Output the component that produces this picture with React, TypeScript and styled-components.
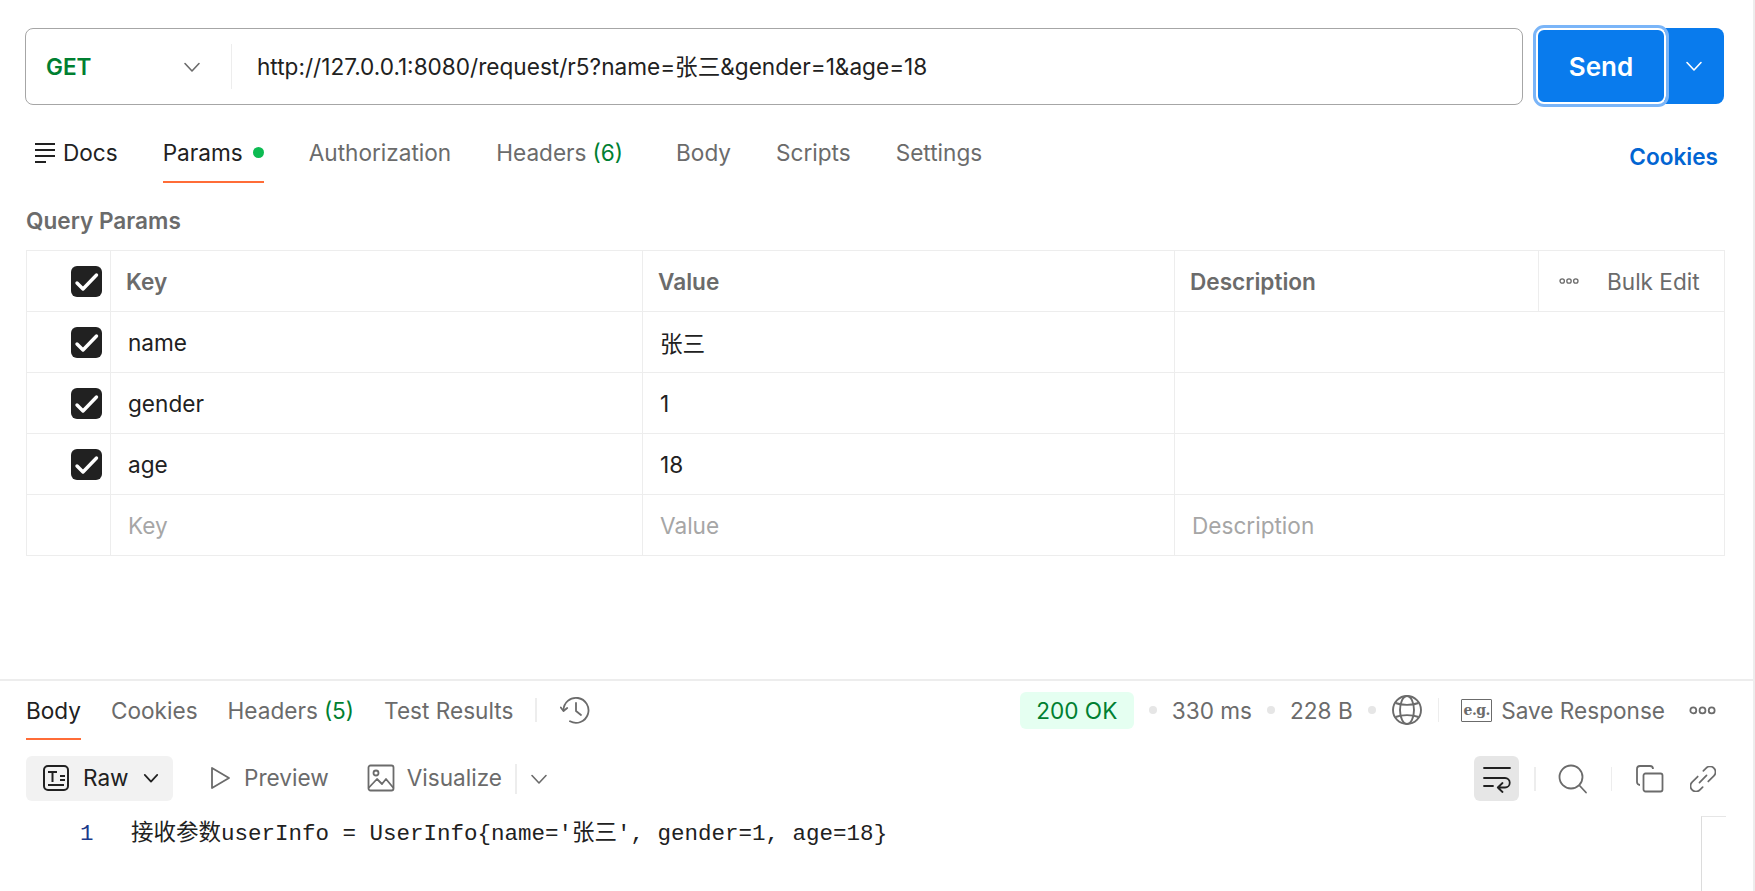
import React from "react";
import styled, { createGlobalStyle } from "styled-components";

const Global = createGlobalStyle`
  html, body { margin: 0; padding: 0; background: #fff; overflow: hidden; }
  * { box-sizing: border-box; }
`;

const sans = `Inter, "Noto Sans CJK SC", sans-serif`;
const grey = "#6b6b6b";
const dark = "#212121";
const line = "#ededed";

const Page = styled.div`
  width: 1755px;
  height: 891px;
  display: flex;
  flex-direction: column;
  font-family: ${sans};
  font-size: 22.6px;
  color: ${dark};
  border-right: 2px solid #ededed;
  overflow: hidden;
`;
const RequestPane = styled.section`
  height: 679px;
  padding: 28px 29px 0 25px;
  flex: none;
`;
const UrlRow = styled.div`
  display: flex;
  height: 77px;
`;
const UrlBox = styled.div`
  width: 1499px;
  height: 77px;
  border: 1.5px solid #a6a6a6;
  border-radius: 8px;
  display: flex;
  align-items: center;
`;
const Method = styled.div`
  width: 206px;
  height: 45px;
  padding: 0 30px 0 20px;
  display: flex;
  align-items: center;
  justify-content: space-between;
  border-right: 1px solid ${line};
  color: #007f31;
  font-weight: 600;
`;
const UrlText = styled.div`
  margin-left: 25px;
  padding-bottom: 3px;
  white-space: nowrap;
`;
const SendGroup = styled.div`
  margin-left: 13px;
  display: flex;
  height: 76px;
`;
const SendButton = styled.button`
  width: 130px;
  height: 76px;
  background: #097bed;
  color: #fff;
  border: 2px solid #fff;
  outline: 3px solid #7ab5f8;
  outline-offset: 0;
  border-radius: 8px;
  font: 600 26px ${sans};
  position: relative;
  z-index: 1;
`;
const SendMenu = styled.div`
  width: 60px;
  margin-left: -2px;
  background: #097bed;
  border-radius: 0 8px 8px 0;
  display: flex;
  align-items: center;
  justify-content: center;
  color: #fff;
`;
const TabRow = styled.div`
  height: 50px;
  margin-top: 28px;
  padding-left: 10px;
  display: flex;
  gap: 45px;
  position: relative;
`;
const Tab = styled.div<{ $active?: boolean; $underline?: boolean; $extra?: number }>`
  height: 50px;
  padding-top: 2px;
  display: flex;
  align-items: flex-start;
  line-height: 36px;
  white-space: nowrap;
  color: ${(p) => (p.$active ? dark : grey)};
  margin-right: ${(p) => p.$extra ?? 0}px;
  border-bottom: 2px solid ${(p) => (p.$underline ? "#ff6c37" : "transparent")};
`;
const DocsIcon = styled.svg`
  margin: 8px 7px 0 0;
`;
const Dot = styled.span`
  width: 11px;
  height: 11px;
  border-radius: 50%;
  background: #0cbb52;
  margin: 12px 0 0 10px;
`;
const Count = styled.span`
  color: #007f31;
  margin-left: 6px;
`;
const CookiesLink = styled.div`
  margin-left: auto;
  margin-right: 6px;
  margin-top: 6px;
  color: #0265d2;
  font-weight: 600;
  line-height: 36px;
`;
const SectionTitle = styled.div`
  margin: 21px 0 0 1px;
  height: 46px;
  line-height: 34px;
  font-weight: 600;
  color: ${grey};
`;
const Table = styled.div`
  margin-left: 1px;
  width: 1699px;
  border: 1px solid ${line};
  border-bottom: 0;
`;
const Row = styled.div<{ $head?: boolean }>`
  display: grid;
  grid-template-columns: ${(p) =>
    p.$head ? "84px 532px 532px 364px 1fr" : "84px 532px 532px 1fr"};
  height: 61px;
  border-bottom: 1px solid ${line};
`;
const Cell = styled.div<{ $muted?: boolean; $head?: boolean; $last?: boolean }>`
  display: flex;
  align-items: center;
  padding-left: ${(p) => (p.$head ? 15 : 17)}px;
  border-right: ${(p) => (p.$last ? 0 : `1px solid ${line}`)};
  color: ${(p) => (p.$muted ? "#a6a6a6" : p.$head ? grey : dark)};
  font-weight: ${(p) => (p.$head ? 600 : 400)};
`;
const CheckCell = styled.div`
  display: flex;
  align-items: center;
  justify-content: flex-end;
  padding-right: 8px;
  border-right: 1px solid ${line};
`;
const Check = styled.span`
  width: 31px;
  height: 31px;
  border-radius: 6px;
  background: ${dark};
  display: flex;
`;
const BulkCell = styled.div`
  display: flex;
  align-items: center;
  color: ${grey};
  padding-left: 20px;
  gap: 28px;
  white-space: nowrap;
`;
const ResponsePane = styled.section`
  flex: 1;
  border-top: 2px solid ${line};
  padding: 0 0 0 26px;
  position: relative;
`;
const RespHead = styled.div`
  height: 59px;
  display: flex;
  align-items: flex-start;
`;
const RespTabs = styled.div`
  display: flex;
  gap: 30px;
  align-items: flex-start;
`;
const RespTab = styled.div<{ $active?: boolean }>`
  height: 59px;
  line-height: 60px;
  color: ${(p) => (p.$active ? dark : grey)};
  border-bottom: 2px solid ${(p) => (p.$active ? "#ff6c37" : "transparent")};
  white-space: nowrap;
`;
const VBar = styled.span<{ $h: number; $ml: number; $mr?: number }>`
  width: 1.5px;
  height: ${(p) => p.$h}px;
  background: ${line};
  margin-left: ${(p) => p.$ml}px;
  margin-right: ${(p) => p.$mr ?? 0}px;
  flex: none;
`;
const HistoryWrap = styled.div`
  height: 58px;
  display: flex;
  align-items: center;
`;
const HeadStatus = styled.div`
  margin-left: auto;
  margin-right: 37px;
  height: 58px;
  display: flex;
  align-items: center;
  color: ${grey};
  white-space: nowrap;
`;
const Badge = styled.div`
  width: 114px;
  height: 37px;
  border-radius: 6px;
  background: #e5fff1;
  color: #007f31;
  display: flex;
  align-items: center;
  justify-content: center;
`;
const Sep = styled.span`
  width: 8px;
  height: 8px;
  border-radius: 50%;
  background: #e6e6e6;
  margin: 0 15px;
`;
const EgBox = styled.span`
  width: 31px;
  height: 23px;
  border: 1.8px solid #6b6b6b;
  border-radius: 1px;
  font: 700 14px "DejaVu Serif", serif;
  letter-spacing: -0.5px;
  display: flex;
  align-items: center;
  justify-content: center;
  color: #6b6b6b;
`;
const SaveText = styled.span`
  margin-left: 9px;
`;
const MoreDots = styled.span`
  margin-left: 24px;
  display: flex;
`;
const Toolbar = styled.div`
  display: flex;
  align-items: center;
  height: 45px;
  margin-top: 16px;
  padding-right: 37px;
`;
const RawBtn = styled.div`
  width: 147px;
  height: 45px;
  border-radius: 6px;
  background: #f2f2f2;
  display: flex;
  align-items: center;
  padding: 0 0 2px 16px;
  gap: 13px;
`;
const RawChevron = styled.span`
  margin-left: 1px;
  display: flex;
`;
const ViewBtn = styled.div<{ $ml: number }>`
  display: flex;
  align-items: center;
  gap: 12px;
  padding-bottom: 2px;
  color: ${grey};
  margin-left: ${(p) => p.$ml}px;
`;
const ToolRight = styled.div`
  margin-left: auto;
  display: flex;
  align-items: center;
`;
const WrapBtn = styled.div`
  width: 45px;
  height: 45px;
  background: #e6e6e6;
  border-radius: 6px;
  display: flex;
  align-items: center;
  justify-content: center;
`;
const LinkGap = styled.span`
  margin-left: 26px;
  display: flex;
`;
const CodeLine = styled.div`
  margin-top: 13px;
  display: flex;
  align-items: baseline;
  height: 36px;
  font-family: "Liberation Mono", "Noto Sans CJK SC", monospace;
  font-size: 22.5px;
  white-space: pre;
`;
const LineNo = styled.span`
  width: 105px;
  padding-left: 54px;
  color: #1c3a8a;
`;
const Minimap = styled.div`
  position: absolute;
  top: 135px;
  right: 27px;
  width: 25px;
  height: 100px;
  border-left: 1px solid #dcdcdc;
  border-top: 1px solid #e6e6e6;
`;

const Chevron = ({ s = 18, c = "#6b6b6b", w = 1.6 }: { s?: number; c?: string; w?: number }) => (
  <svg width={s} height={s} viewBox="0 0 18 18" fill="none">
    <path d="M2 5.5 9 13l7-7.5" stroke={c} strokeWidth={w} strokeLinecap="round" strokeLinejoin="round" />
  </svg>
);
const Tick = () => (
  <svg width="31" height="31" viewBox="0 0 31 31" fill="none">
    <path d="M6 17l6 6L25.500 9" stroke="#fff" strokeWidth="3.4" strokeLinecap="round" strokeLinejoin="round" />
  </svg>
);
const Dots = ({ w = 20 }: { w?: number }) => (
  <svg width={w} height={(w * 8) / 20} viewBox="0 0 20 8" fill="none" stroke="#6b6b6b" strokeWidth="1.3">
    <circle cx="3.2" cy="4" r="2.2" />
    <circle cx="10" cy="4" r="2.2" />
    <circle cx="16.8" cy="4" r="2.2" />
  </svg>
);

const rows = [
  ["name", "张三"],
  ["gender", "1"],
  ["age", "18"],
];

export default function App() {
  return (
    <Page>
      <Global />
      <RequestPane>
        <UrlRow>
          <UrlBox>
            <Method>
              GET
              <Chevron />
            </Method>
            <UrlText>http://127.0.0.1:8080/request/r5?name=张三&amp;gender=1&amp;age=18</UrlText>
          </UrlBox>
          <SendGroup>
            <SendButton>Send</SendButton>
            <SendMenu>
              <Chevron c="#fff" />
            </SendMenu>
          </SendGroup>
        </UrlRow>
        <TabRow>
          <Tab $active>
            <DocsIcon width="21" height="21" viewBox="0 0 21 21" fill="none" stroke="#212121" strokeWidth="1.8">
              <path d="M0 1h20M0 7h20M0 13h20M0 19h11" />
            </DocsIcon>
            Docs
          </Tab>
          <Tab $active $underline>
            Params
            <Dot />
          </Tab>
          <Tab>Authorization</Tab>
          <Tab $extra={8}>
            Headers<Count>(6)</Count>
          </Tab>
          <Tab>Body</Tab>
          <Tab>Scripts</Tab>
          <Tab>Settings</Tab>
          <CookiesLink>Cookies</CookiesLink>
        </TabRow>
        <SectionTitle>Query Params</SectionTitle>
        <Table>
          <Row $head>
            <CheckCell>
              <Check>
                <Tick />
              </Check>
            </CheckCell>
            <Cell $head>Key</Cell>
            <Cell $head>Value</Cell>
            <Cell $head>Description</Cell>
            <BulkCell>
              <Dots />
              Bulk Edit
            </BulkCell>
          </Row>
          {rows.map(([k, v]) => (
            <Row key={k}>
              <CheckCell>
                <Check>
                  <Tick />
                </Check>
              </CheckCell>
              <Cell>{k}</Cell>
              <Cell>{v}</Cell>
              <Cell $last />
            </Row>
          ))}
          <Row>
            <CheckCell />
            <Cell $muted>Key</Cell>
            <Cell $muted>Value</Cell>
            <Cell $muted $last>
              Description
            </Cell>
          </Row>
        </Table>
      </RequestPane>
      <ResponsePane>
        <RespHead>
          <RespTabs>
            <RespTab $active>Body</RespTab>
            <RespTab>Cookies</RespTab>
            <RespTab>
              Headers<Count>(5)</Count>
            </RespTab>
            <RespTab>Test Results</RespTab>
          </RespTabs>
          <HistoryWrap>
            <VBar $h={24} $ml={22} $mr={23} />
            <svg width="31" height="30" viewBox="0 0 31 30" fill="none" stroke="#6b6b6b" strokeWidth="1.8" strokeLinecap="round" strokeLinejoin="round">
              <path d="M3.500 15.500A12.500 12.500 0 1 1 10 26.300" />
              <path d="M0.800 12.500 3.500 16l3.700-3" />
              <path d="M16 8v8l5 4" />
            </svg>
          </HistoryWrap>
          <HeadStatus>
            <Badge>200 OK</Badge>
            <Sep />
            330 ms
            <Sep />
            228 B
            <Sep />
            <svg width="32" height="32" viewBox="0 0 32 32" fill="none" stroke="#6b6b6b" strokeWidth="1.9">
              <circle cx="16" cy="16" r="14" />
              <ellipse cx="16" cy="16" rx="7" ry="14" />
              <path d="M4.500 9c6 2.500 17 2.500 23 0M4.500 23c6-2.500 17-2.500 23 0" />
            </svg>
            <VBar $h={24} $ml={15} $mr={22} />
            <EgBox>e.g.</EgBox>
            <SaveText>Save Response</SaveText>
            <MoreDots>
              <Dots w={27} />
            </MoreDots>
          </HeadStatus>
        </RespHead>
        <Toolbar>
          <RawBtn>
            <svg width="28" height="28" viewBox="0 0 28 28" fill="none" stroke="#212121" strokeWidth="2">
              <rect x="2" y="2" width="24" height="24" rx="4" />
              <path d="M6 8h9M10.500 8v10M18 12h5M18 16h5M6 21h16" />
            </svg>
            Raw
            <RawChevron>
              <Chevron s={16} c="#212121" w={2} />
            </RawChevron>
          </RawBtn>
          <ViewBtn $ml={35}>
            <svg width="24" height="26" viewBox="0 0 24 26" fill="none" stroke="#6b6b6b" strokeWidth="1.8" strokeLinejoin="round">
              <path d="M4 3l17 10L4 23z" />
            </svg>
            Preview
          </ViewBtn>
          <ViewBtn $ml={38}>
            <svg width="28" height="28" viewBox="0 0 28 28" fill="none" stroke="#6b6b6b" strokeWidth="1.8" strokeLinejoin="round">
              <rect x="1.500" y="1.500" width="25" height="25" rx="2" />
              <circle cx="9" cy="9" r="2.500" />
              <path d="M1.500 24 10 15l5 5 4-5 7.500 9" />
            </svg>
            Visualize
          </ViewBtn>
          <VBar $h={30} $ml={13} $mr={13} />
          <Chevron s={18} />
          <ToolRight>
            <WrapBtn>
              <svg width="28" height="28" viewBox="0 0 28 28" fill="none" stroke="#212121" strokeWidth="1.8" strokeLinecap="round" strokeLinejoin="round">
                <path d="M1 3h26M1 13h21a4.700 4.700 0 0 1 0 9.500h-7M19.500 18l-4.700 4.500 4.700 4.500M1 21h9" />
              </svg>
            </WrapBtn>
            <VBar $h={24} $ml={15} $mr={22} />
            <svg width="30" height="30" viewBox="0 0 30 30" fill="none" stroke="#6b6b6b" strokeWidth="1.8" strokeLinecap="round">
              <circle cx="13" cy="13" r="11.500" />
              <path d="M21.500 21.500 28 28.500" />
            </svg>
            <VBar $h={24} $ml={23} $mr={24} />
            <svg width="28" height="28" viewBox="0 0 28 28" fill="none" stroke="#6b6b6b" strokeWidth="1.8" strokeLinejoin="round">
              <rect x="7.500" y="8.500" width="19" height="18" rx="2" />
              <path d="M4 20a3 3 0 0 1-3-3V4a3 3 0 0 1 3-3h10a3 3 0 0 1 3 3" />
            </svg>
            <LinkGap>
              <svg width="26" height="26" viewBox="0 0 26 26" fill="none" stroke="#6b6b6b" strokeWidth="1.7" strokeLinecap="round">
                <g transform="rotate(-45 13 13)">
                  <path d="M11 7.500H3.100a5.500 5.500 0 0 0 0 11H7" />
                  <path d="M15 18.500H22.900a5.500 5.500 0 0 0 0-11H19" />
                  <path d="M8 13h10" />
                </g>
              </svg>
            </LinkGap>
          </ToolRight>
        </Toolbar>
        <CodeLine>
          <LineNo>1</LineNo>
          接收参数userInfo = UserInfo{"{"}name='张三', gender=1, age=18{"}"}
        </CodeLine>
        <Minimap />
      </ResponsePane>
    </Page>
  );
}
